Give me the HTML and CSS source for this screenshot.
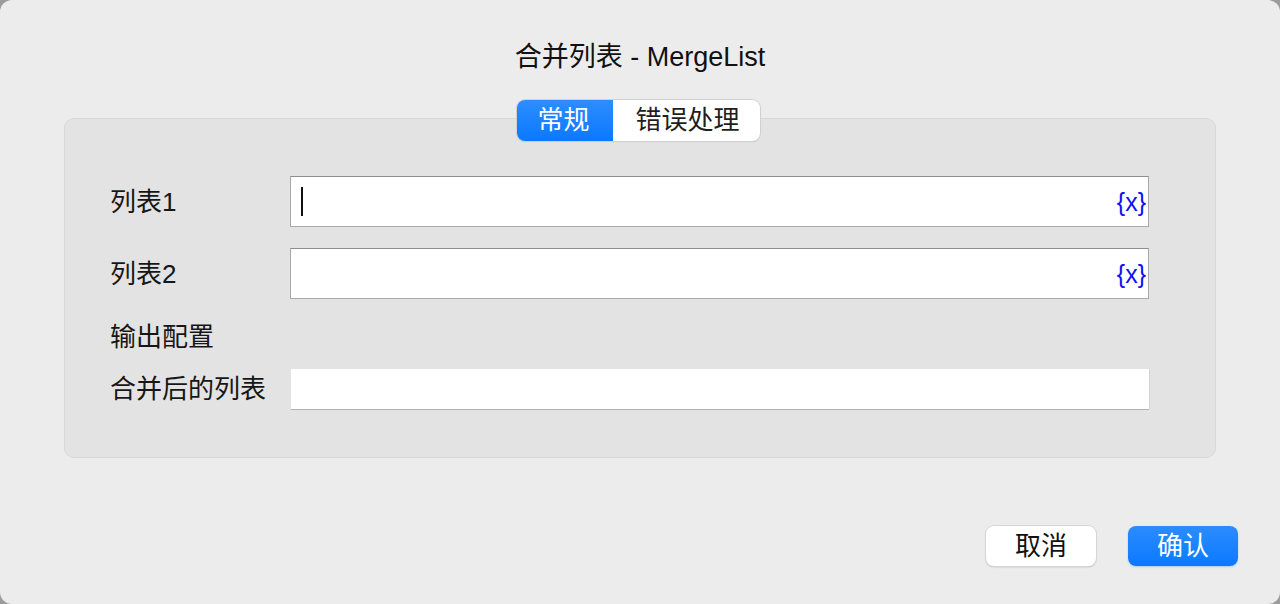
FILE: index.html
```html
<!DOCTYPE html>
<html lang="zh-CN">
<head>
<meta charset="utf-8">
<title>合并列表 - MergeList</title>
<link rel="stylesheet" href="styles.css">
</head>
<body>
<div class="window">
  <div class="title">合并列表 - MergeList</div>
  <div class="tabs">
    <span class="tab active">常规</span>
    <span class="tab">错误处理</span>
  </div>
  <div class="panel">
    <div class="row row-input">
      <label class="label">列表1</label>
      <div class="field">
        <span class="caret"></span>
        <span class="var">{x}</span>
      </div>
    </div>
    <div class="row row-input row-second">
      <label class="label">列表2</label>
      <div class="field">
        <span class="var">{x}</span>
      </div>
    </div>
    <div class="section">输出配置</div>
    <div class="row row-output">
      <label class="label">合并后的列表</label>
      <div class="field field-flat"></div>
    </div>
  </div>
  <div class="actions">
    <button class="btn btn-cancel">取消</button>
    <button class="btn btn-ok">确认</button>
  </div>
</div>
</body>
</html>
```
FILE: styles.css
```css
html, body {
  margin: 0;
  padding: 0;
  background: #9c9c9c;
}
body {
  width: 1280px;
  height: 604px;
  overflow: hidden;
  font-family: "Liberation Sans", "Noto Sans CJK SC", sans-serif;
  color: #161616;
}
.window {
  width: 1280px;
  height: 604px;
  box-sizing: border-box;
  background: #ececec;
  border-radius: 12px;
  display: flex;
  flex-direction: column;
  padding-top: 42px;
}
.title {
  text-align: center;
  font-size: 27px;
  line-height: 30px;
  height: 30px;
  color: #111;
}
.tabs {
  align-self: center;
  margin-top: 28px;
  display: flex;
  height: 41px;
  box-sizing: border-box;
  border-radius: 8px;
  background: #fff;
  box-shadow: 0 0 0 1px #d0d0d0, 0 1px 1px rgba(0,0,0,0.18);
  position: relative;
  z-index: 1;
  overflow: hidden;
  margin-left: -3px;
}
.tab {
  font-size: 26px;
  line-height: 41px;
  padding: 0 20px 0 23px;
  color: #1e1e1e;
}
.tab.active {
  background: linear-gradient(#2e8dff, #0a79ff);
  color: #fff;
  padding: 0 23px 0 20px;
}
.panel {
  margin: -23px 64px 0;
  height: 340px;
  box-sizing: border-box;
  background: #e3e3e3;
  border: 1px solid #d8d8d8;
  border-radius: 10px;
  padding: 57px 66px 0 45px;
  display: flex;
  flex-direction: column;
}
.row {
  display: flex;
  align-items: center;
}
.label {
  width: 180px;
  flex: none;
  font-size: 26px;
  line-height: 30px;
  color: #161616;
}
.field {
  flex: 1;
  height: 51px;
  box-sizing: border-box;
  background: #fff;
  border: 1px solid #a9a9a9;
  border-top-color: #8f8f8f;
  display: flex;
  align-items: center;
  padding: 0 2px 0 10px;
}
.row-second {
  margin-top: 21px;
}
.caret {
  width: 2px;
  height: 29px;
  background: #111;
}
.var {
  margin-left: auto;
  font-family: "Liberation Sans", sans-serif;
  font-size: 25px;
  line-height: 30px;
  color: #1010f5;
}
.section {
  margin-top: 23px;
  font-size: 26px;
  line-height: 30px;
  height: 30px;
}
.row-output {
  margin-top: 17px;
}
.field-flat {
  height: 40px;
  border: none;
  margin-left: 1px;
  box-shadow: 0 1px 0 #b3b3b3, 1px 0 0 #d4d4d4;
}
.actions {
  margin-top: 68px;
  display: flex;
  justify-content: flex-end;
  gap: 32px;
  padding-right: 42px;
}
.btn {
  width: 110px;
  height: 40px;
  border: none;
  border-radius: 8px;
  font-family: "Liberation Sans", "Noto Sans CJK SC", sans-serif;
  font-size: 26px;
  line-height: 40px;
  padding: 0;
}
.btn-cancel {
  background: #fff;
  color: #111;
  box-shadow: 0 0 0 1px #d6d6d6, 0 1px 2px rgba(0,0,0,0.25);
}
.btn-ok {
  background: linear-gradient(#2c8cff, #0a79ff);
  color: #fff;
  box-shadow: 0 1px 2px rgba(0,90,220,0.25);
}
```
